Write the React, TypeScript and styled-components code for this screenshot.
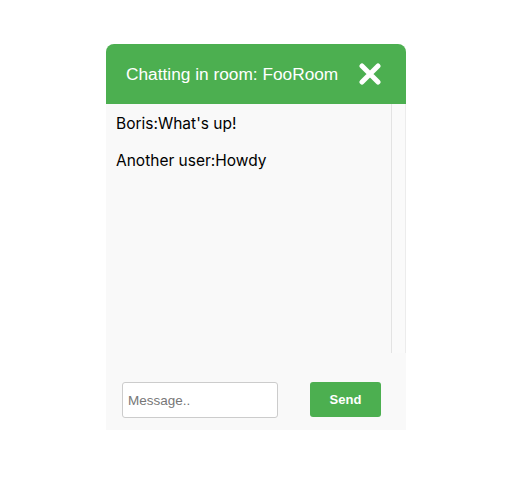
import React from "react";
import styled, { createGlobalStyle } from "styled-components";

const Global = createGlobalStyle`
  html, body { margin: 0; padding: 0; background: #ffffff; }
  body { font-family: "Liberation Sans", Arial, sans-serif; }
`;

const Page = styled.div`
  width: 518px;
  height: 491px;
  padding: 44px 0 0 106px;
  box-sizing: border-box;
`;

const Card = styled.div`
  width: 300px;
  display: flex;
  flex-direction: column;
  background: #f9f9f9;
  border-radius: 8px 8px 0 0;
  overflow: hidden;
`;

const Header = styled.div`
  height: 60px;
  background: #4caf50;
  display: flex;
  align-items: center;
  justify-content: space-between;
  padding: 0 24px 0 20px;
  box-sizing: border-box;
`;

const Title = styled.span`
  color: #ffffff;
  font-size: 17.3px;
  line-height: 22px;
`;

const CloseButton = styled.button`
  border: 0;
  background: transparent;
  padding: 0;
  width: 24px;
  height: 24px;
  display: flex;
  align-items: center;
  justify-content: center;
  cursor: pointer;
`;

const Messages = styled.div`
  height: 249px;
  display: flex;
`;

const List = styled.div`
  flex: 1;
  padding: 10px 10px 0 10px;
  display: flex;
  flex-direction: column;
  gap: 17px;
`;

const Message = styled.div`
  font-family: Inter, "Liberation Sans", Arial, sans-serif;
  font-size: 15.5px;
  line-height: 20px;
  color: #000000;
`;

const Track = styled.div`
  width: 13px;
  border-left: 1px solid #e3e3e3;
  border-right: 1px solid #ececec;
  background: #fafafa;
`;

const Footer = styled.form`
  height: 77px;
  display: flex;
  align-items: flex-start;
  padding: 29px 0 0 16px;
  box-sizing: border-box;
  gap: 32px;
`;

const Input = styled.input`
  width: 156px;
  height: 36px;
  box-sizing: border-box;
  border: 1px solid #cccccc;
  border-radius: 3px;
  background: #ffffff;
  padding: 0 5px;
  font-family: "Liberation Sans", Arial, sans-serif;
  font-size: 13.5px;
  color: #333;
  &::placeholder { color: #777777; }
  outline: none;
`;

const SendButton = styled.button`
  width: 71px;
  height: 35px;
  border: 0;
  border-radius: 3px;
  background: #4caf50;
  color: #ffffff;
  font-family: "Liberation Sans", Arial, sans-serif;
  font-size: 13px;
  font-weight: bold;
  cursor: pointer;
`;

export default function App() {
  return (
    <>
      <Global />
      <Page>
        <Card>
          <Header>
            <Title>Chatting in room: FooRoom</Title>
            <CloseButton aria-label="Close">
              <svg width="22" height="22" viewBox="0 0 22 22">
                <path d="M3 3 L19 19 M19 3 L3 19" stroke="#ffffff" strokeWidth="5" strokeLinecap="round" />
              </svg>
            </CloseButton>
          </Header>
          <Messages>
            <List>
              <Message>Boris:What's up!</Message>
              <Message>Another user:Howdy</Message>
            </List>
            <Track />
          </Messages>
          <Footer onSubmit={(e) => e.preventDefault()}>
            <Input placeholder="Message.." />
            <SendButton type="submit">Send</SendButton>
          </Footer>
        </Card>
      </Page>
    </>
  );
}
